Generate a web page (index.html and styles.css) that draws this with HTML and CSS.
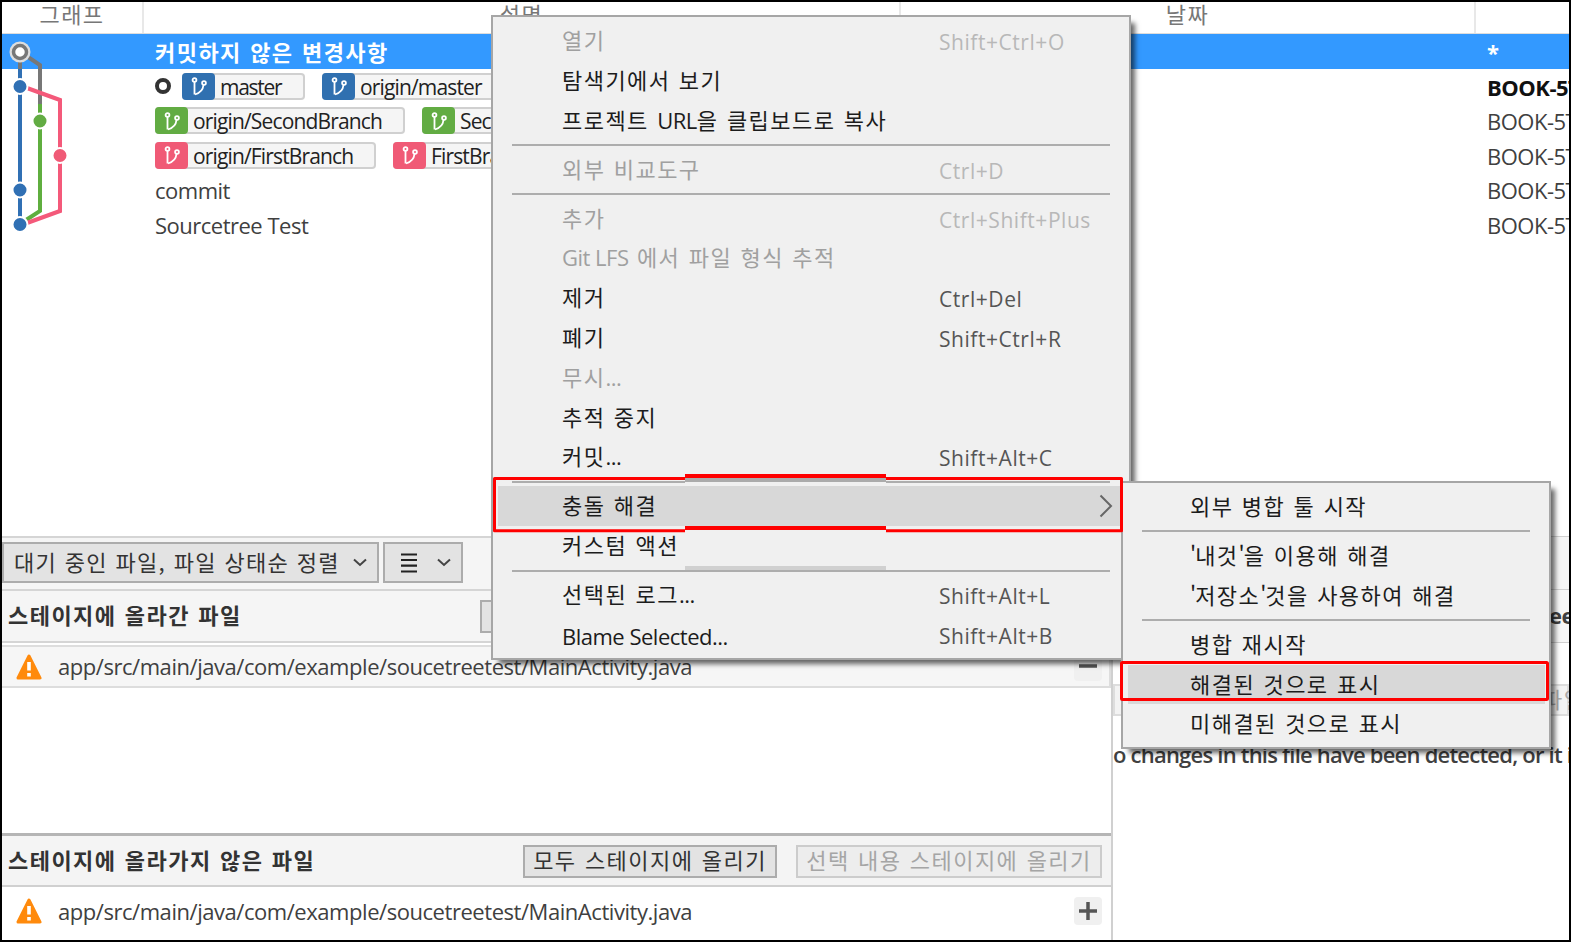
FILE: index.html
```html
<!DOCTYPE html>
<html lang="ko">
<head>
<meta charset="utf-8">
<title>Sourcetree</title>
<link rel="stylesheet" href="styles.css">
</head>
<body>
<svg width="0" height="0" class="defs">
  <symbol id="branch" viewBox="0 0 18 22"><g fill="none" stroke="#fff" stroke-width="1.800"><circle cx="4.500" cy="5" r="1.900"/><circle cx="14" cy="8" r="1.900"/><path d="M4.500 7V19.500M5 19.500C10 18 13 15 13.500 10"/></g></symbol>
  <symbol id="warn" viewBox="0 0 26 26"><path d="M13 2L24 24H2Z" fill="#ff8a0c" stroke="#ff8a0c" stroke-width="3" stroke-linejoin="round"/><path d="M13 8v8.500M13 19v3.500" stroke="#fff" stroke-width="3.600"/></symbol>
  <symbol id="chev" viewBox="0 0 14 9"><path d="M1 1.500L7 7L13 1.500" fill="none" stroke="#444" stroke-width="2"/></symbol>
</svg>
<main class="window">
  <section class="log">
    <header class="cols"><span class="c-graph">그래프</span><span class="c-desc">설명</span><span class="c-date">날짜</span></header>
    <div class="commits">
      <div class="row selected"><span class="desc bold">커밋하지 않은 변경사항</span><span class="author en bold">*</span></div>
      <div class="row"><span class="desc"><i class="head"></i><span class="tag blue w1"><b><svg><use href="#branch"/></svg></b><em class="t1">master</em></span><span class="tag blue w4"><b><svg><use href="#branch"/></svg></b><em>origin/master</em></span></span><span class="author en bold dark">BOOK-5T</span></div>
      <div class="row"><span class="desc"><span class="tag green w2"><b><svg><use href="#branch"/></svg></b><em>origin/SecondBranch</em></span><span class="tag green"><b><svg><use href="#branch"/></svg></b><em>SecondBranch</em></span></span><span class="author en">BOOK-5T</span></div>
      <div class="row"><span class="desc"><span class="tag pink w3"><b><svg><use href="#branch"/></svg></b><em>origin/FirstBranch</em></span><span class="tag pink"><b><svg><use href="#branch"/></svg></b><em>FirstBranch</em></span></span><span class="author en">BOOK-5T</span></div>
      <div class="row"><span class="desc en">commit</span><span class="author en">BOOK-5T</span></div>
      <div class="row"><span class="desc en">Sourcetree Test</span><span class="author en">BOOK-5T</span></div>
      <svg class="graph" width="80" height="208" viewBox="0 34 80 208">
        <g fill="none" stroke-width="4">
          <path d="M20 60V69" stroke="#777"/><path d="M20 69V225" stroke="#3070b4"/>
          <path d="M28 57L40 65V104" stroke="#777"/><path d="M40 104V211L26 220" stroke="#5fae3f"/>
          <path d="M27 88L60 100V211L27 223" stroke="#f4597a"/>
        </g>
        <g stroke="#fff" stroke-width="2">
          <circle cx="20" cy="86.500" r="7.500" fill="#3070b4"/><circle cx="20" cy="190" r="7.500" fill="#3070b4"/><circle cx="20" cy="224.500" r="7.500" fill="#3070b4"/>
          <circle cx="40" cy="121" r="7.500" fill="#62ac43"/><circle cx="60" cy="155.500" r="7.500" fill="#f05a76"/>
        </g>
        <circle cx="20" cy="52" r="10.500" fill="#ddd"/><circle cx="20" cy="52" r="6.500" fill="#fff" stroke="#777" stroke-width="3.500"/>
      </svg>
    </div>
  </section>
  <section class="work">
    <div class="files">
      <div class="toolbar"><button class="btn sort"><span>대기 중인 파일, 파일 상태순 정렬</span><svg class="chev"><use href="#chev"/></svg></button><button class="btn view"><svg class="lines" viewBox="0 0 18 20"><path d="M1 1.500H17M1 7H17M1 12.700H17M1 18.500H17" stroke="#222" stroke-width="2.200"/></svg><svg class="chev"><use href="#chev"/></svg></button></div>
      <div class="head1"><span class="bold">스테이지에 올라간 파일</span><button class="btn unstage"></button></div>
      <div class="file staged"><svg class="warn"><use href="#warn"/></svg><span class="path">app/src/main/java/com/example/soucetreetest/MainActivity.java</span><span class="pm"><svg viewBox="0 0 28 28"><path d="M5 13H23" stroke="#555" stroke-width="3.500"/></svg></span></div>
      <div class="space"></div>
      <div class="head2"><span class="bold">스테이지에 올라가지 않은 파일</span><button class="btn all">모두 스테이지에 올리기</button><button class="btn picked">선택 내용 스테이지에 올리기</button></div>
      <div class="file last"><svg class="warn"><use href="#warn"/></svg><span class="path">app/src/main/java/com/example/soucetreetest/MainActivity.java</span><span class="pm"><svg viewBox="0 0 28 28"><path d="M5 14H23M14 5V23" stroke="#555" stroke-width="3.500"/></svg></span></div>
    </div>
    <div class="diff">
      <div class="bar"></div>
      <div class="name en bold">ee</div>
      <div class="hunk">파일</div>
      <p class="msg">o changes in this file have been detected, or it is</p>
    </div>
  </section>

  <nav class="menu main">
    <div class="item off"><span>열기</span><kbd>Shift+Ctrl+O</kbd></div>
    <div class="item"><span>탐색기에서 보기</span></div>
    <div class="item"><span>프로젝트 <span class="url">URL</span>을 클립보드로 복사</span></div>
    <hr>
    <div class="item off"><span>외부 비교도구</span><kbd>Ctrl+D</kbd></div>
    <hr>
    <div class="item off"><span>추가</span><kbd>Ctrl+Shift+Plus</kbd></div>
    <div class="item off"><span><span class="url">Git LFS</span> 에서 파일 형식 추적</span></div>
    <div class="item"><span>제거</span><kbd>Ctrl+Del</kbd></div>
    <div class="item"><span>폐기</span><kbd>Shift+Ctrl+R</kbd></div>
    <div class="item off"><span>무시<span class="dots">...</span></span></div>
    <div class="item"><span>추적 중지</span></div>
    <div class="item"><span>커밋<span class="dots">...</span></span><kbd>Shift+Alt+C</kbd></div>
    <hr>
    <div class="item hot"><span>충돌 해결</span><svg class="arrow" viewBox="0 0 14 24"><path d="M1.500 1.500L12 12L1.500 22.500" fill="none" stroke="#666" stroke-width="2"/></svg></div>
    <div class="item"><span>커스텀 액션</span></div>
    <hr>
    <div class="item"><span>선택된 로그<span class="dots">...</span></span><kbd>Shift+Alt+L</kbd></div>
    <div class="item"><span class="blame">Blame Selected...</span><kbd>Shift+Alt+B</kbd></div>
  </nav>
  <nav class="menu sub">
    <div class="item"><span>외부 병합 툴 시작</span></div>
    <hr>
    <div class="item"><span><span class="q">'</span>내것<span class="q">'</span>을 이용해 해결</span></div>
    <div class="item"><span><span class="q">'</span>저장소<span class="q">'</span>것을 사용하여 해결</span></div>
    <hr>
    <div class="item"><span>병합 재시작</span></div>
    <div class="item hot"><span>해결된 것으로 표시</span></div>
    <div class="item"><span>미해결된 것으로 표시</span></div>
  </nav>
  <svg class="marks" width="1571" height="942">
    <path d="M685 478.500H494.500V530.700H685M886 478.500H1121.500V530.700H886" fill="none" stroke="red" stroke-width="3" stroke-linejoin="round"/>
    <path d="M685 474h201v4H685zM685 526h201v4H685z" fill="red"/>
    <path d="M685 478h201v4H685z" fill="#ababab"/><path d="M685 482h201v4H685zM685 530h201v3H685z" fill="#f0f0f0"/>
    <path d="M685 566h201v4H685z" fill="#d0d0d0"/>
    <rect x="1121.500" y="662.500" width="426" height="37" rx="1" fill="none" stroke="red" stroke-width="3"/>
  </svg>
</main>
</body>
</html>
```
FILE: styles.css
```css
* { box-sizing: border-box; }
body { margin: 0; background: #000; }
.defs { position: absolute; }
.window {
  position: relative; width: 1571px; height: 942px; overflow: hidden;
  border: 2px solid #000; background: #fff; color: #404040;
  display: flex; flex-direction: column;
  font: 22px/34px "Noto Sans CJK KR", sans-serif;
  letter-spacing: 1.45px; word-spacing: 0.8px; white-space: nowrap;
}
.bold { font-weight: 700; }
.en, .tag em, .path, kbd, .msg, .url, .dots, .blame {
  font-family: "Open Sans", "Noto Sans", sans-serif;
  letter-spacing: -0.5px; word-spacing: 0;
}
.path { letter-spacing: -0.45px; }

.log { height: 534px; flex: none; }
.cols { display: flex; height: 32px; line-height: 23px; color: #777; border-bottom: 1px solid #ddd; }
.cols span { border-right: 2px solid #e8e8e8; text-align: center; flex: none; }
.c-graph { width: 142px; }
.c-desc { width: 757px; }
.c-date { width: 575px; }
.commits { position: relative; }
.graph { position: absolute; left: -2px; top: 0; }
.row { display: flex; height: 34.5px; padding-left: 153px; align-items: center; }
.selected { background: #3399ff; color: #fff; }
.desc { width: 1332px; height: 34px; display: flex; align-items: center; flex: none; }
.desc.en { padding-top: 2px; }
.author { padding-top: 1px; height: 34px; }
.dark { color: #111; }
.head { width: 16px; height: 16px; border: 4px solid #333; border-radius: 50%; margin-right: 11px; flex: none; }
.tag { display: flex; height: 27px; margin-top: 1px; border: 2px solid #d0d0d0; border-left: 0; border-radius: 4px; background: #f5f5f5; color: #222; margin-right: 17px; flex: none; }
.tag b { width: 33px; height: 27px; margin-top: -2px; border-radius: 4px; display: flex; align-items: center; justify-content: center; }
.tag b svg { width: 18px; height: 22px; }
.tag em { font-style: normal; font-size: 21px; letter-spacing: -0.85px; line-height: 25px; padding-left: 5px; }
.tag .t1 { letter-spacing: -1.3px; }
.blue b { background: #3070b0; }
.green b { background: #62ac43; }
.pink b { background: #f05a76; }
.w1 { width: 123px; }
.w2 { width: 250px; }
.w3 { width: 221px; }
.w4 { width: 182px; }

.work { display: flex; flex: 1; }
.files { width: 1111px; flex: none; display: flex; flex-direction: column; border-right: 2px solid #d0d0d0; }
.btn { font: inherit; color: #333; letter-spacing: inherit; word-spacing: inherit; border: 2px solid #acacac; background: #e3e3e3; padding: 0; margin: 0; white-space: nowrap; }
.toolbar { display: flex; height: 53px; padding-top: 4px; gap: 4px; background: #f5f5f5; border-top: 2px solid #d5d5d5; }
.toolbar .btn { height: 41px; display: flex; align-items: center; line-height: 36px; }
.chev { width: 14px; height: 9px; flex: none; }
.sort { width: 377px; padding: 0 10px; justify-content: space-between; }
.sort span { letter-spacing: 1.25px; word-spacing: 0.4px; margin-top: -3px; }
.view { width: 80px; padding: 0 10px 0 15px; justify-content: space-between; }
.lines { width: 18px; height: 20px; }
.head1 { display: flex; height: 54px; padding: 0 0 0 6px; border-top: 2px solid #d5d5d5; border-bottom: 2px solid #d5d5d5; background: #f5f5f5; align-items: center; color: #333; }
.head1 span { width: 472px; margin-top: -5px; }
.unstage { width: 200px; height: 33px; }
.file { display: flex; align-items: center; height: 48px; padding: 0 9px 0 14px; }
.last { margin-bottom: 5px; }
.staged { height: 43px; margin: 2px 0 0; border: 2px solid #ddd; border-left: 0; background: #f6f6f6; padding-right: 7px; }
.staged .path { margin-top: -2px; }
.warn { width: 26px; height: 26px; margin-right: 16px; flex: none; }
.pm { margin-left: auto; width: 28px; height: 28px; background: #f0f0f0; border-radius: 4px; }
.pm svg { display: block; }
.space { flex: 1; }
.head2 { display: flex; height: 54px; padding: 0 9px 0 6px; border-top: 3px solid #b5b5b5; border-bottom: 2px solid #d0d0d0; background: #f4f4f4; align-items: center; color: #333; }
.head2 .bold { flex: 1; margin-top: -4px; }
.head2 .btn { height: 33px; margin-top: 1px; line-height: 25px; padding-bottom: 3px; }
.all { width: 254px; margin-right: 19px; }
.head2 .picked { width: 306px; color: #a5a5a5; border-color: #ccc; background: #ededed; }
.diff { flex: 1; overflow: hidden; }
.bar { height: 53px; border-top: 1px solid #d0d0d0; background: #f5f5f5; }
.name { height: 54px; padding: 8px 0 0 436px; border: solid #d0d0d0; border-width: 1px 0; background: #f7f7f7; }
.hunk { margin: 41px 0 0; height: 32px; padding-left: 427px; border: 2px solid #ddd; background: #f3f3f3; color: #aaa; line-height: 25px; }
.msg { margin: 21px 0 0; font-weight: 600; letter-spacing: -0.78px; }

.menu { position: absolute; background: #f0f0f0; border: 2px solid #a6a6a6; padding-top: 4px; color: #1c1c1c; box-shadow: 6px 6px 5px -2px rgba(0,0,0,.6); }
.main { left: 489px; top: 13px; width: 640px; height: 645px; }
.sub { left: 1119px; top: 479px; width: 430px; height: 268px; }
.item { display: flex; height: 39.8px; line-height: 37.8px; margin: 0 5px; padding-left: 64px; }
.main .item { margin-right: 8px; }
.sub .item { margin-right: 4px; padding-left: 62px; }
.item > span { width: 377px; }
.menu hr { height: 2px; margin: 3.6px 19px; border: 0; background: #adadad; }
.item > kbd, .item > .blame { line-height: 42px; }
kbd { color: #555; font-size: 21px; letter-spacing: 0.55px; }
.q { letter-spacing: -1px; }
.off { color: #a0a0a0; }
.off kbd { color: #b8b8b8; }
.hot { background: #d8d8d8; }
.arrow { width: 14px; height: 24px; align-self: center; margin-left: 160px; }
.marks { position: absolute; left: -2px; top: -2px; }
```
